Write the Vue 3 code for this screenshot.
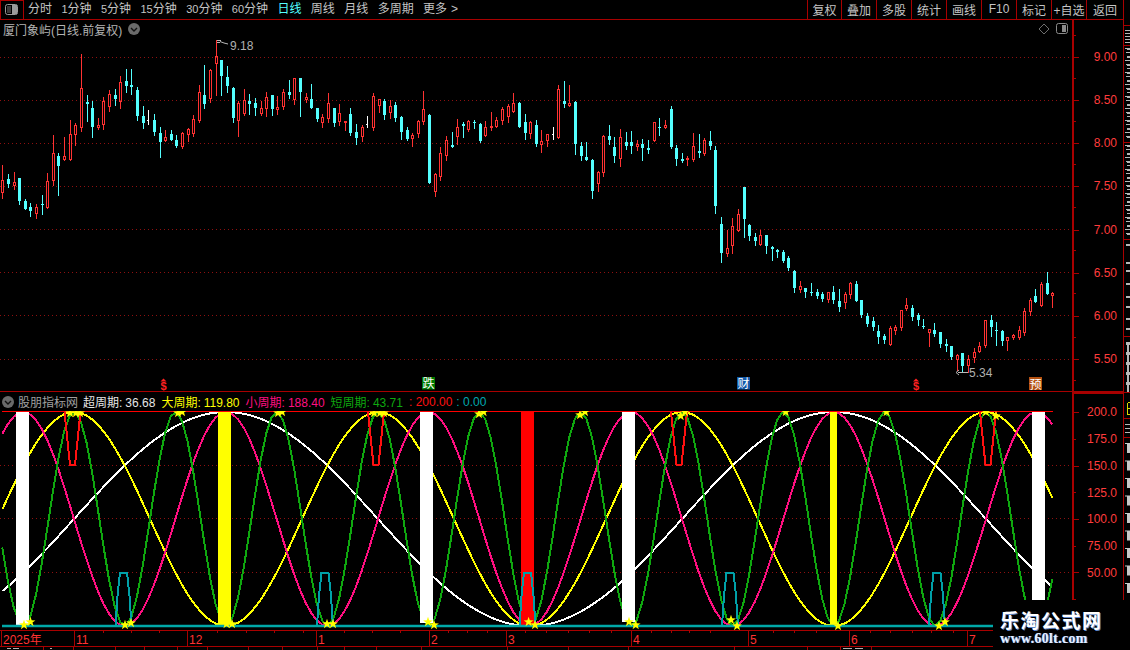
<script setup>
const seg = [
  [40, 'r 375 420 458 473,c 402 417 432 440,r 396 426 438 446,c 414 414 483 492,c 478 483 507 507,c 490 501 513 528,r 492 501 522 534,c 465 492 495 522,r 400 423 503 503,r 285 339 423 436,c 339 348 378 465,r 291 348 360 360,r 240 282 360 360,r 249 255 285 315,r 42 144 263 273,c 165 186 192 243,c 183 204 261 291,r 234 255 264 267,r 171 183 255 267,r 150 162 201 213,c 147 165 177 195,r 108 126 186 204,c 87 123 138 156,c 87 135 141 162,c 141 150 228 240,c 198 228 249 264,w 210 240 241 255,c 222 240 276 285,c 261 279 306 351,r 270 291 303 303,c 270 282 300 300,c 285 300 318 321,r 276 279 321 324,r 264 267 285 303,r 225 237 282 288,r 135 156 243 246,c 75 165 192 204,r 87 90 177 186,r 0 48 72 165,c 60 60 108 165,c 78 111 138 156,c 141 144 234 246,r 183 189 243 288,r 147 180 222 225,c 162 183 192 222,c 174 189 204 225,r 183 204 222 225,r 156 171 207 228,c 165 165 207 225,r 168 201 210 222'],
  [70, 'r 57 66 111 117,c 30 66 75 84,r 24 24 90 102,c 24 24 66 138,r 69 81 90 96,c 42 87 114 114,c 114 114 147 153,r 132 141 159 171,r 69 99 147 156,c 114 114 159 168,r 102 129 156 165,r 153 153 159 180,c 114 132 189 195,c 162 186 204 222,r 165 171 201 213,w 138 162 163 174,r 69 78 174 180,r 87 87 108 126,c 87 93 135 147,r 90 108 129 144,c 96 105 144 153,c 138 141 186 207,c 171 180 207 210,r 189 195 207 228,r 150 153 192 201,r 63 117 156 162,c 132 135 339 339,r 309 312 366 378,r 231 249 321 330,r 198 210 258 270,c 186 225 231 231,r 147 171 201 222,c 156 162 168 201,r 150 153 180 183,c 150 156 158 174,c 159 162 213 216,r 153 171 198 198,r 126 168 174 180,r 141 150 171 171,r 111 117 153 162,r 102 108 141 156,r 69 99 126 126,c 96 99 171 171,c 132 156 189 207,r 153 156 192 204,c 150 165 222 228,r 180 213 225 246,r 192 192 213 228,w 171 192 193 210,r 45 57 204 204'],
  [70, 'c 33 93 102 111,r 45 99 108 108,c 93 96 222 252,c 216 228 258 270,c 216 261 270 270,c 267 270 363 384,r 303 306 342 363,r 195 198 309 318,c 165 198 210 222,c 201 231 258 276,r 177 201 267 288,c 186 216 228 237,c 183 216 228 249,r 210 222 231 240,c 207 222 234 270,c 210 234 240 249,r 156 156 213 213,c 144 171 174 195,r 150 165 174 174,c 108 117 231 234,c 225 234 267 285,c 249 267 273 276,r 258 264 270 285,r 189 228 270 273,c 192 243 249 261,r 204 210 252 255,c 183 213 228 237,c 228 240 408 429,c 441 462 549 576,r 480 534 552 558,r 444 468 528 549,r 417 432 483 483,c 351 351 447 501,c 462 465 498 510,c 489 501 513 525,r 480 495 525 525,c 495 495 528 549,c 528 531 537 570,c 537 540 546 561,c 540 546 573 576,c 558 564 594 600'],
  [260, 'c 30 33 84 96,r 63 78 90 96,c 84 84 96 111,c 69 96 99 105,c 87 96 108 114,c 96 102 117 123,r 96 96 120 126,c 78 96 120 129,c 87 123 141 153,r 96 102 129 144,r 66 69 105 114,c 63 72 123 123,c 120 120 165 171,c 159 168 192 198,c 171 183 201 210,c 195 213 231 249,c 222 228 240 249,r 198 204 255 255,r 195 201 213 222,r 150 150 204 210,r 114 135 147 150,c 135 144 171 180,c 159 165 180 195,c 177 198 201 204,r 207 207 219 258,c 189 210 222 228,c 216 216 252 261,c 237 252 258 273,c 258 258 291 297,r 282 285 300 330,c 279 279 318 333,r 285 297 318 336,r 264 276 294 306,r 246 258 276 276,r 180 180 258 261,c 165 180 201 228,c 186 210 213 255,c 210 213 243 255,r 231 231 243 270,r 222 225 234 237,r 198 210 234 237,r 144 153 219 225,r 114 120 156 165,c 87 108 126 126,r 66 72 138 138,c 36 69 102 102,r 96 99 108 141'],
]

const candles = []
seg.forEach(([off, s]) => {
  s.split(',').forEach((row) => {
    const p = row.split(' ')
    const v = p.slice(1).map((n) => Math.round(off + Number(n) / 3))
    candles.push({ t: p[0], hi: v[0], top: v[1], bot: v[2], lo: v[3] })
  })
})

const cx = (i) => Math.round(2.33 + i * 5.615)

function build() {
  const red = []
  const cyanLine = []
  const cyanFill = []
  const white = []
  candles.forEach((c, i) => {
    const x = cx(i)
    const h = Math.max(c.bot - c.top, 1)
    const wick = `M${x + 0.5} ${c.hi}V${c.top}M${x + 0.5} ${c.top + h}V${c.lo + 1}`
    if (c.t === 'r') {
      red.push(wick)
      if (h > 2) red.push(`M${x - 0.5} ${c.top + 0.5}h2v${h - 1}h-2z`)
      else red.push(`M${x - 1} ${c.top + 0.5}h3M${x - 1} ${c.top + h - 0.5}h3`)
    } else if (c.t === 'c') {
      cyanLine.push(wick)
      cyanFill.push(`M${x - 1} ${c.top}h3v${h}h-3z`)
    } else {
      white.push(`M${x + 0.5} ${c.hi}V${c.lo}M${x - 1} ${c.top + 0.5}h2`)
    }
  })
  return { red: red.join(''), cyanLine: cyanLine.join(''), cyanFill: cyanFill.join(''), white: white.join('') }
}
const price = build()

const priceGrid = [57, 100, 143, 186, 229, 272, 315, 359]
const priceLabels = [
  ['9.00', 57], ['8.50', 100], ['8.00', 143], ['7.50', 186],
  ['7.00', 229.5], ['6.50', 272.5], ['6.00', 315.5], ['5.50', 359],
]
const priceMinor = [35, 78, 121, 164, 207, 250, 293, 337, 380]

const vy = (v) => 412 + (200 - v) * 1.07
function wave(period, peak) {
  const pts = []
  for (let i = 0; i < candles.length; i++) {
    const x = 2.33 + i * 5.615
    const v = 100 + 100 * Math.cos((2 * Math.PI * (x - peak)) / period)
    pts.push(`${x.toFixed(1)},${vy(v).toFixed(1)}`)
  }
  return pts.join(' ')
}
const T = 608
const curves = [
  { cls: 'c-white', pts: wave(T, 226) },
  { cls: 'c-yellow', pts: wave(T / 2, 226 + T / 4) },
  { cls: 'c-pink', pts: wave(T / 3, 226) },
  { cls: 'c-green', pts: wave(T / 6, 986) },
]
const bars = [
  { x: 16, w: 13, c: '#ffffff', h: 213 },
  { x: 218, w: 13, c: '#ffff00', h: 213 },
  { x: 420, w: 13, c: '#ffffff', h: 211 },
  { x: 521, w: 13, c: '#ff0000', h: 213 },
  { x: 622, w: 13, c: '#ffffff', h: 210 },
  { x: 830, w: 7, c: '#ffff00', h: 213 },
  { x: 1032, w: 13, c: '#ffffff', h: 213 },
]

const redPulses = [72.5, 376, 679, 988].map(
  (c) => `${c - 8},412 ${c - 2.5},465 ${c + 2.5},465 ${c + 8},412`,
)
const tealPulses = [123.5, 325, 527.5, 730, 937].map(
  (c) => `${c - 8},626 ${c - 6},596 ${c - 3.5},572.5 ${c + 3.5},572.5 ${c + 6},596 ${c + 8},626`,
)

function star(x, y) {
  const pts = []
  for (let i = 0; i < 10; i++) {
    const r = i % 2 === 0 ? 5.2 : 2.1
    const a = -Math.PI / 2 + (i * Math.PI) / 5
    pts.push(`${(x + r * Math.cos(a)).toFixed(1)},${(y + r * Math.sin(a)).toFixed(1)}`)
  }
  return pts.join(' ')
}
const stars = [
  [24, 625], [30.5, 622], [125, 625], [131, 623], [226.5, 624], [232, 624], [327, 624], [333, 624],
  [428, 622], [434, 625], [528.6, 622], [535, 625], [629, 622], [635.7, 625], [731, 620], [737, 626],
  [838, 626], [939, 626], [945, 622],
  [70, 413], [76, 413], [80, 413], [178, 413], [182, 412], [278, 413], [282, 412], [374, 413], [380, 413], [384, 413],
  [479, 414], [483.6, 412], [580, 415], [585, 412], [680.7, 416], [685, 412], [785.7, 412], [886.5, 412], [986, 412], [996, 416],
].map(([x, y]) => star(x, y))

const subLabels = [
  ['200.0', 412], ['175.0', 439], ['150.0', 466], ['125.0', 492.5], ['100.0', 519], ['75.00', 546], ['50.00', 572.5],
]

const menu = [
  { text: '分时' },
  { pre: '1', text: '分钟' },
  { pre: '5', text: '分钟' },
  { pre: '15', text: '分钟' },
  { pre: '30', text: '分钟' },
  { pre: '60', text: '分钟' },
  { text: '日线', active: true },
  { text: '周线' },
  { text: '月线' },
  { text: '多周期' },
  { text: '更多', more: true },
]
const tools = ['复权', '叠加', '多股', '统计', '画线', 'F10', '标记', '+自选', '返回']

const readouts = [
  { cls: 'white', name: '超周期:', val: '36.68' },
  { cls: 'yellow', name: '大周期:', val: '119.80' },
  { cls: 'pink', name: '小周期:', val: '188.40' },
  { cls: 'green', name: '短周期:', val: '43.71' },
  { cls: 'red', name: '', val: ': 200.00' },
  { cls: 'teal', name: '', val: ': 0.00' },
]

const months = [
  ['11', 74], ['12', 187], ['1', 316], ['2', 429], ['3', 506], ['4', 631], ['5', 748], ['6', 849], ['7', 967],
]
const weekTicks = [103, 131, 159, 217, 246, 274, 303, 344, 372, 400, 448, 467, 487, 525, 546, 568, 589, 611, 651, 671, 689, 710, 773, 794, 816, 870, 890, 912, 931, 953]
const tabTicks = [43, 73, 115, 144, 177, 207, 248, 282, 317, 344, 376, 421, 507, 568, 628, 734, 807, 840, 871]

const stripSeps = [25, 45, 142, 239, 336, 392, 418, 437]
const stripMarks = []
for (let y = 30; y < 43; y += 3) stripMarks.push([1125, y, 5, 1])
for (const [a, b] of [[48, 140], [145, 237]]) {
  for (let y = a, k = 0; y < b; y += 4, k++) {
    stripMarks.push([1125 + (k % 3), y, 5 - (k % 3), 1])
    if (k % 2 === 0) stripMarks.push([1127, y + 1, 3, 1])
  }
}
for (const y of [244, 262, 270, 283, 296, 306, 318, 328]) stripMarks.push([1126, y, 4, 2])
for (const y of [342, 352, 362, 372, 382]) stripMarks.push([1126, y, 4, 3])
stripMarks.push([1127, 342, 2, 50])
for (const y of [424, 428, 432]) stripMarks.push([1125, y, 5, 1])
const stripBlocks = []
for (let i = 0; i < 9; i++) stripBlocks.push(443 + i * 17.5)
</script>

<template>
  <div class="screen">
    <div class="main">
      <header class="topbar">
        <div class="panel-btn">
          <svg width="14" height="12" viewBox="0 0 14 12">
            <rect x="0.5" y="0.5" width="12" height="10" rx="2" fill="none" stroke="#9a9a9a" />
            <rect x="7" y="1" width="5" height="9" fill="#9a9a9a" />
            <rect x="2" y="2" width="4" height="7" fill="#3a3a3a" />
          </svg>
        </div>
        <nav class="menu">
          <span v-for="m in menu" :key="m.text + (m.pre || '')" class="menu-item" :class="{ active: m.active }">
            <span v-if="m.pre" class="digit">{{ m.pre }}</span>{{ m.text }}<span v-if="m.more" class="more">&gt;</span>
          </span>
        </nav>
        <div class="tools">
          <span v-for="t in tools" :key="t" class="tool">{{ t }}</span>
        </div>
      </header>

      <section class="pane price-pane">
        <div class="plot">
          <div class="pane-head">
            <span class="title">厦门象屿(日线.前复权)</span>
            <svg class="chev" width="12" height="12" viewBox="0 0 12 12">
              <circle cx="6" cy="6" r="6" fill="#6a6a6a" />
              <path d="M3 5l3 3 3-3" fill="none" stroke="#111" stroke-width="1.4" />
            </svg>
            <span class="head-fill"></span>
            <svg class="diamond" width="12" height="12" viewBox="0 0 12 12">
              <path d="M6 1l5 5-5 5-5-5z" fill="none" stroke="#6e6e6e" />
            </svg>
            <svg class="boxicon" width="13" height="12" viewBox="0 0 13 12">
              <rect x="0.5" y="0.5" width="11" height="10" rx="2" fill="none" stroke="#8a8a8a" />
              <rect x="6" y="2" width="4" height="7" fill="#8a8a8a" />
            </svg>
          </div>
          <svg class="chart" width="1072" height="353" viewBox="0 38 1072 353">
            <path v-for="y in priceGrid" :key="y" :d="`M0 ${y + 0.5}H1072`" class="dots" />
            <path :d="price.red" class="k-red" />
            <path :d="price.cyanLine" class="k-cyan" />
            <path :d="price.cyanFill" class="k-fill" />
            <path :d="price.white" class="k-white" />
            <path d="M217 40.5H221M217 42.5H220M220 41.5L224 43L228 44" class="note-line" />
            <text x="230" y="50" class="note">9.18</text>
            <path d="M958 372.5H968M959 370L956 372.5L959 375" class="note-line" />
            <text x="969" y="377" class="note">5.34</text>

            <path d="M163.5 378.5l3 3h-6z" fill="#ff2020" />
            <text x="163.5" y="390" class="sign">$</text>
            <path d="M916 378.5l3 3h-6z" fill="#ff2020" />
            <text x="916" y="390" class="sign">$</text>

            <rect x="422" y="377" width="13" height="12.5" fill="#007a00" />
            <text x="428.5" y="388" class="badge">跌</text>
            <rect x="737" y="377" width="13" height="12.5" fill="#1259a8" />
            <text x="743.5" y="388" class="badge">财</text>
            <rect x="1029" y="377" width="13" height="13" fill="#b4500f" />
            <text x="1035.5" y="388.5" class="badge">预</text>
          </svg>
        </div>
        <div class="axis">
          <svg width="49" height="371" viewBox="1074 20 49 371">
            <path v-for="l in priceLabels" :key="l[0]" :d="`M1074 ${Math.round(l[1]) + 0.5}H1079`" class="tick" />
            <path v-for="y in priceMinor" :key="y" :d="`M1074 ${y + 0.5}H1076`" class="tick" />
            <text v-for="l in priceLabels" :key="l[0]" x="1117" :y="l[1] + 4" class="axis-label">{{ l[0] }}</text>
          </svg>
        </div>
      </section>

      <section class="pane sub-pane">
        <div class="plot">
          <div class="sub-head">
            <svg class="chev-sub" width="12" height="12" viewBox="0 0 12 12">
              <circle cx="6" cy="6" r="6" fill="#6a6a6a" />
              <path d="M3 5l3 3 3-3" fill="none" stroke="#111" stroke-width="1.4" />
            </svg>
            <span class="sub-title">股朋指标网</span>
            <span v-for="r in readouts" :key="r.val" class="readout" :class="r.cls">
              <span v-if="r.name" class="r-name">{{ r.name }}</span>{{ r.val }}
            </span>
          </div>
          <svg class="chart" width="1072" height="219" viewBox="0 411 1072 219">
            <path v-for="y in [465, 518, 572]" :key="y" :d="`M0 ${y + 0.5}H1072`" class="dots" />
            <polyline v-for="c in curves" :key="c.cls" :points="c.pts" class="curve" :class="c.cls" />
            <rect v-for="b in bars" :key="b.x" :x="b.x" y="412" :width="b.w" :height="b.h" :fill="b.c" />
            <polyline v-for="p in redPulses" :key="p" :points="p" class="pulse-red" />
            <polyline v-for="p in tealPulses" :key="p" :points="p" class="pulse-teal" />
            <path d="M2 626H1053" class="base-teal" />
            <path d="M2 411.5H1053" class="top-red" />
            <polygon v-for="s in stars" :key="s" :points="s" fill="#ffff00" />
          </svg>
        </div>
        <div class="axis sub-axis">
          <svg width="49" height="236" viewBox="1074 394 49 236">
            <path v-for="y in [412, 466, 519, 572]" :key="y" :d="`M1074 ${y + 0.5}H1079`" class="tick" />
            <path v-for="y in [439, 492, 546, 599]" :key="y" :d="`M1074 ${y + 0.5}H1076`" class="tick" />
            <text v-for="l in subLabels" :key="l[0]" x="1117" :y="l[1] + 4" class="axis-label">{{ l[0] }}</text>
          </svg>
        </div>
      </section>

      <footer class="timeline">
        <svg width="1124" height="20" viewBox="0 630 1124 20">
          <path d="M0 630.5H1124M0 646.5H1124" class="tick" />
          <path v-for="x in weekTicks" :key="x" :d="`M${x + 0.5} 631V633`" class="tick" />
          <path v-for="m in months" :key="m[1]" :d="`M${m[1] + 0.5} 631V646`" class="tick" />
          <path v-for="x in tabTicks" :key="x" :d="`M${x + 0.5} 647V650`" class="tick" />
          <path d="M1 631V646" class="tick" />
          <text x="3" y="643.5" class="date">2025年</text>
          <text v-for="m in months" :key="m[0]" :x="m[1] + 2" y="643.5" class="date">{{ m[0] }}</text>
          <path d="M7 648.5H11M13 648.5H19M50 648.5H52M843 648.5H852M855 648.5H863" class="tab-mark" />
        </svg>
      </footer>
    </div>

    <aside class="strip">
      <svg width="6" height="650" viewBox="1124 0 6 650">
        <path v-for="y in stripSeps" :key="y" :d="`M1124 ${y + 0.5}H1130`" class="tick" />
        <rect v-for="(m, i) in stripMarks" :key="i" :x="m[0]" :y="m[1]" :width="m[2]" :height="m[3]" fill="#b8b8b8" />
        <path d="M1127.5 402.5H1130M1127.5 402.5V414.5H1130M1127.5 408.5H1130" class="strip-yellow" />
        <g v-for="y in stripBlocks" :key="y">
          <rect x="1127" :y="y" width="3" height="10" fill="#c8c8c8" />
          <rect x="1125" :y="y" width="2" height="1" fill="#c8c8c8" />
        </g>
      </svg>
    </aside>

    <div class="watermark">
      <div class="wm-cn">乐淘公式网</div>
      <div class="wm-en">www.60lt.com</div>
    </div>
  </div>
</template>

<style>
html,
body {
  margin: 0;
  background: #000;
}
</style>

<style scoped>
.screen {
  position: relative;
  display: flex;
  width: 1130px;
  height: 650px;
  overflow: hidden;
  background: #000;
  color: #c0c0c0;
  font-family: "Liberation Sans", "Noto Sans CJK SC", sans-serif;
  font-size: 12px;
}
svg {
  display: block;
}
.main {
  display: flex;
  flex-direction: column;
  flex: none;
  width: 1124px;
  box-sizing: border-box;
  border-right: 1px solid #a80000;
}
.strip {
  flex: none;
  width: 6px;
}
.topbar {
  display: flex;
  align-items: stretch;
  flex: none;
  height: 20px;
  box-sizing: border-box;
  border-bottom: 1px solid #a80000;
}
.panel-btn {
  display: flex;
  align-items: center;
  justify-content: center;
  width: 24px;
  box-sizing: border-box;
  border: 1px solid #a80000;
  border-bottom: 0;
}
.menu {
  display: flex;
  align-items: center;
  gap: 9.4px;
  padding-left: 4px;
  line-height: 17px;
  padding-bottom: 1px;
}
.menu-item {
  white-space: nowrap;
  color: #c4c4c4;
}
.menu-item.active {
  color: #54ffff;
}
.digit {
  font-size: 11px;
}
.more {
  margin-left: 4px;
}
.tools {
  display: flex;
  margin-left: auto;
}
.tool {
  display: flex;
  align-items: center;
  justify-content: center;
  width: 35px;
  box-sizing: border-box;
  padding-bottom: 1px;
  border-left: 1px solid #a80000;
  color: #c4c4c4;
  white-space: nowrap;
}
.tool:first-child {
  width: 34px;
}
.tool:last-child {
  width: 37px;
}
.pane {
  display: flex;
  flex: none;
}
.price-pane {
  height: 372px;
  box-sizing: border-box;
  border-bottom: 1px solid #a80000;
}
.sub-pane {
  height: 238px;
}
.plot {
  flex: none;
  width: 1072px;
}
.pane-head {
  display: flex;
  align-items: center;
  height: 18px;
  padding-left: 3px;
  padding-right: 3px;
  box-sizing: border-box;
}
.title {
  color: #b4b4b4;
}
.chev {
  margin-left: 6px;
}
.head-fill {
  flex: 1;
}
.boxicon {
  margin-left: 6px;
}
.axis {
  flex: none;
  width: 51px;
  box-sizing: border-box;
  border-left: 2px solid #a80000;
}
.sub-axis {
  border-top: 2px solid #a80000;
}
.sub-head {
  display: flex;
  align-items: center;
  gap: 6px;
  height: 19px;
  padding-left: 2px;
  box-sizing: border-box;
  white-space: nowrap;
}
.chev-sub {
  margin-right: -2px;
}
.sub-title {
  margin-right: -1px;
  color: #a0a0a0;
}
.r-name {
  margin-right: 3px;
}
.readout.white {
  color: #e6e6e6;
}
.readout.yellow {
  color: #ffff00;
}
.readout.pink {
  color: #ff0f80;
}
.readout.green {
  color: #0fa80f;
}
.readout.red {
  margin-right: -2px;
  color: #ff1010;
}
.readout.teal {
  color: #00a8b0;
}
.dots {
  fill: none;
  stroke: #8e1010;
  stroke-dasharray: 1 3;
  shape-rendering: crispEdges;
}
.k-red {
  fill: none;
  stroke: #ff3232;
  shape-rendering: crispEdges;
}
.k-cyan {
  fill: none;
  stroke: #54ffff;
  shape-rendering: crispEdges;
}
.k-fill {
  fill: #54ffff;
  shape-rendering: crispEdges;
}
.k-white {
  fill: none;
  stroke: #ffffff;
  shape-rendering: crispEdges;
}
.note-line {
  fill: none;
  stroke: #b8b8b8;
}
.note {
  fill: #b0b0b0;
  font-size: 12px;
}
.sign {
  fill: #ff2020;
  font-size: 11px;
  font-weight: 700;
  text-anchor: middle;
}
.badge {
  fill: #ffffff;
  font-size: 12px;
  text-anchor: middle;
}
.tick {
  fill: none;
  stroke: #a80000;
  shape-rendering: crispEdges;
}
.axis-label {
  fill: #ff3c3c;
  font-size: 12px;
  text-anchor: end;
}
.curve {
  fill: none;
  stroke-width: 2;
  shape-rendering: crispEdges;
}
.c-white {
  stroke: #ffffff;
}
.c-yellow {
  stroke: #ffff00;
}
.c-pink {
  stroke: #ff0f80;
}
.c-green {
  stroke: #0fa80f;
}
.pulse-red {
  fill: none;
  stroke: #ff1010;
  stroke-width: 2;
  shape-rendering: crispEdges;
}
.pulse-teal {
  fill: none;
  stroke: #00a0a8;
  stroke-width: 2;
  shape-rendering: crispEdges;
}
.base-teal {
  fill: none;
  stroke: #00a8a8;
  stroke-width: 2.5;
}
.top-red {
  fill: none;
  stroke: #ff0000;
  shape-rendering: crispEdges;
}
.timeline {
  flex: none;
  height: 20px;
}
.date {
  fill: #ff3232;
  font-size: 12px;
}
.tab-mark {
  fill: none;
  stroke: #b0b0b0;
  shape-rendering: crispEdges;
}
.strip-yellow {
  fill: none;
  stroke: #d8d800;
  shape-rendering: crispEdges;
}
.watermark {
  position: absolute;
  left: 993px;
  top: 600px;
  width: 137px;
  height: 50px;
  box-sizing: border-box;
  padding: 9px 0 0 7px;
  background: #000;
}
.wm-cn {
  color: #ffffff;
  font-family: "Noto Sans CJK SC", sans-serif;
  font-size: 19px;
  font-weight: 700;
  line-height: 22px;
  letter-spacing: 1.5px;
  text-shadow: 1px 1px 0 #5f86c8;
  white-space: nowrap;
}
.wm-en {
  margin-top: 1px;
  color: #e8f2ff;
  font-family: "Liberation Serif", serif;
  font-size: 14px;
  font-weight: 700;
  line-height: 14px;
  letter-spacing: 0.3px;
  text-shadow: 1px 0 0 #4f78c0;
  white-space: nowrap;
}
</style>
